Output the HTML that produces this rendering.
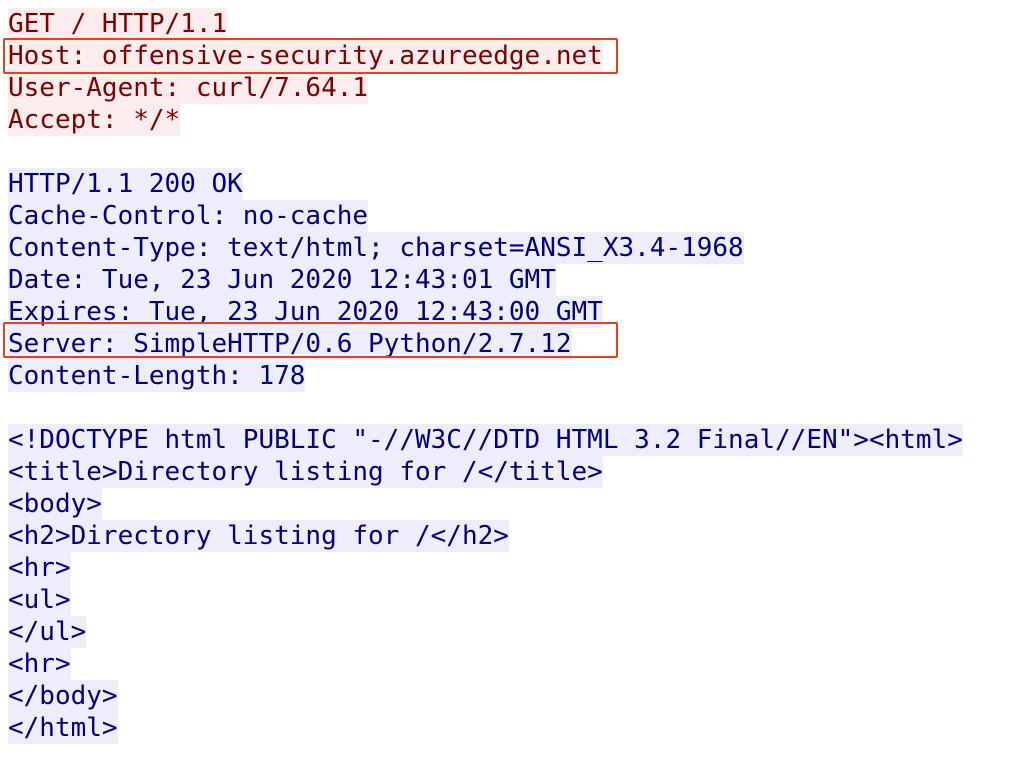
<!DOCTYPE html>
<html><head><style>
html,body{margin:0;padding:0;background:#fff;width:1010px;height:780px;overflow:hidden}
.w{position:absolute;left:8px;top:8px;font-family:"DejaVu Sans Mono","Liberation Mono",monospace;font-size:26px;line-height:32px}
.l{height:32px;white-space:pre}
.l span{display:inline-block;height:32px}
.c span{background:#fbeded;color:#800000}
.s span{background:#ededfb;color:#000080}
.box{position:absolute;left:3px;width:611px;height:32px;border:2px solid #e8401c;border-radius:2px}
</style></head><body>
<div class="w">
<div class="l c"><span>GET / HTTP/1.1</span></div>
<div class="l c"><span>Host: offensive-security.azureedge.net</span></div>
<div class="l c"><span>User-Agent: curl/7.64.1</span></div>
<div class="l c"><span>Accept: */*</span></div>
<div class="l"></div>
<div class="l s"><span>HTTP/1.1 200 OK</span></div>
<div class="l s"><span>Cache-Control: no-cache</span></div>
<div class="l s"><span>Content-Type: text/html; charset=ANSI_X3.4-1968</span></div>
<div class="l s"><span>Date: Tue, 23 Jun 2020 12:43:01 GMT</span></div>
<div class="l s"><span>Expires: Tue, 23 Jun 2020 12:43:00 GMT</span></div>
<div class="l s"><span>Server: SimpleHTTP/0.6 Python/2.7.12</span></div>
<div class="l s"><span>Content-Length: 178</span></div>
<div class="l"></div>
<div class="l s"><span>&lt;!DOCTYPE html PUBLIC "-//W3C//DTD HTML 3.2 Final//EN"&gt;&lt;html&gt;</span></div>
<div class="l s"><span>&lt;title&gt;Directory listing for /&lt;/title&gt;</span></div>
<div class="l s"><span>&lt;body&gt;</span></div>
<div class="l s"><span>&lt;h2&gt;Directory listing for /&lt;/h2&gt;</span></div>
<div class="l s"><span>&lt;hr&gt;</span></div>
<div class="l s"><span>&lt;ul&gt;</span></div>
<div class="l s"><span>&lt;/ul&gt;</span></div>
<div class="l s"><span>&lt;hr&gt;</span></div>
<div class="l s"><span>&lt;/body&gt;</span></div>
<div class="l s"><span>&lt;/html&gt;</span></div>
</div>
<div class="box" style="top:38px"></div>
<div class="box" style="top:322px"></div>
</body></html>
